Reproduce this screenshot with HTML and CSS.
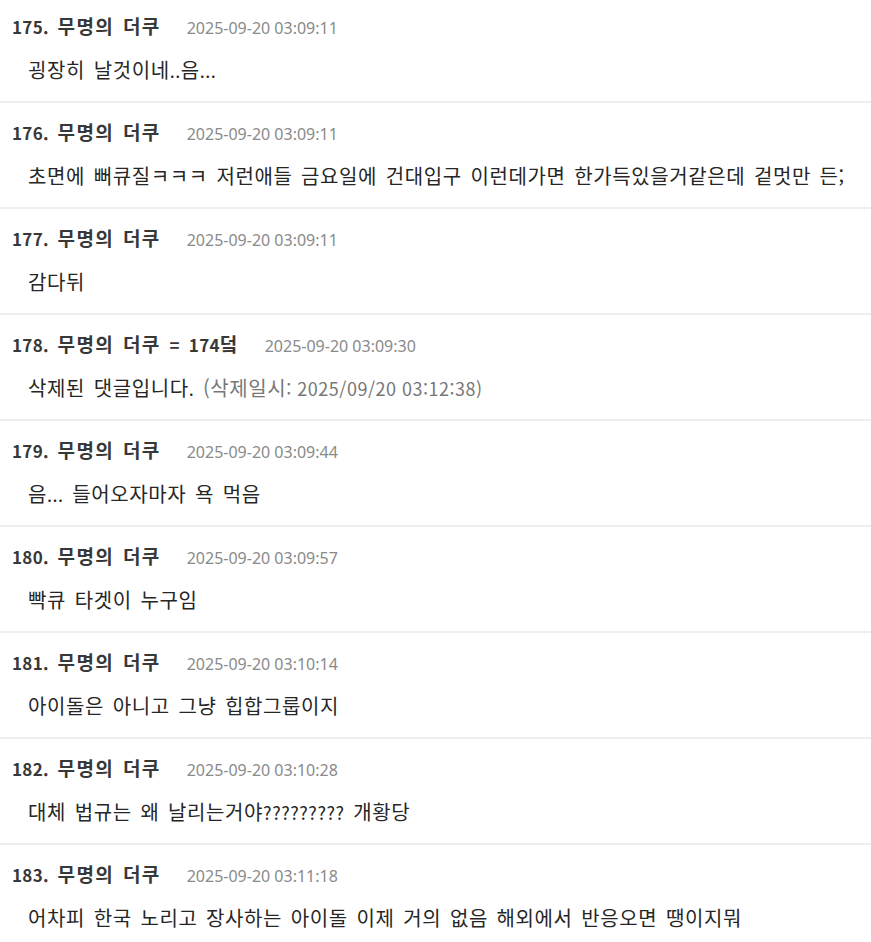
FILE: index.html
```html
<!DOCTYPE html>
<html lang="ko">
<head>
<meta charset="utf-8">
<link rel="stylesheet" href="styles.css">
</head>
<body>
<ul class="list">
  <li class="item"><div class="head"><span class="name"><span class="num">175.</span> 무명의 더쿠</span><span class="time">2025-09-20 03:09:11</span></div><p class="body">굉장히 날것이네<span class="lat">..</span>음<span class="lat">...</span></p></li>
  <li class="item"><div class="head"><span class="name"><span class="num">176.</span> 무명의 더쿠</span><span class="time">2025-09-20 03:09:11</span></div><p class="body">초면에 뻐큐질ㅋㅋㅋ 저런애들 금요일에 건대입구 이런데가면 한가득있을거같은데 겉멋만 든;</p></li>
  <li class="item"><div class="head"><span class="name"><span class="num">177.</span> 무명의 더쿠</span><span class="time">2025-09-20 03:09:11</span></div><p class="body">감다뒤</p></li>
  <li class="item"><div class="head"><span class="name"><span class="num">178.</span> 무명의 더쿠 <span class="num eq">= 174</span>덬</span><span class="time">2025-09-20 03:09:30</span></div><p class="body">삭제된 댓글입니다<span class="lat">.</span> <span class="del">(삭제일시<span class="lat">: 2025/09/20 03:12:38)</span></span></p></li>
  <li class="item"><div class="head"><span class="name"><span class="num">179.</span> 무명의 더쿠</span><span class="time">2025-09-20 03:09:44</span></div><p class="body">음<span class="lat">...</span> 들어오자마자 욕 먹음</p></li>
  <li class="item"><div class="head"><span class="name"><span class="num">180.</span> 무명의 더쿠</span><span class="time">2025-09-20 03:09:57</span></div><p class="body">빡큐 타겟이 누구임</p></li>
  <li class="item"><div class="head"><span class="name"><span class="num">181.</span> 무명의 더쿠</span><span class="time">2025-09-20 03:10:14</span></div><p class="body">아이돌은 아니고 그냥 힙합그룹이지</p></li>
  <li class="item"><div class="head"><span class="name"><span class="num">182.</span> 무명의 더쿠</span><span class="time">2025-09-20 03:10:28</span></div><p class="body">대체 법규는 왜 날리는거야<span class="lat">?????????</span> 개황당</p></li>
  <li class="item"><div class="head"><span class="name"><span class="num">183.</span> 무명의 더쿠</span><span class="time">2025-09-20 03:11:18</span></div><p class="body">어차피 한국 노리고 장사하는 아이돌 이제 거의 없음 해외에서 반응오면 땡이지뭐</p></li>
</ul>
</body>
</html>
```

FILE: styles.css
```css
html, body {
  margin: 0;
  padding: 0;
  background: #fff;
}
body {
  font-family: "Noto Sans CJK KR", "Noto Sans", sans-serif;
  overflow: hidden;
}
.list {
  list-style: none;
  margin: -3px 0 0 0;
  padding: 0;
}
.item {
  padding: 16px 12px 18px;
  border-bottom: 2px solid #eeeeee;
}
.head {
  display: flex;
  align-items: baseline;
  gap: 26px;
  height: 26px;
  line-height: 26px;
  white-space: nowrap;
}
.name {
  font-size: 19px;
  font-weight: 700;
  letter-spacing: 1.4px;
  word-spacing: 2px;
  color: #383838;
}
.num {
  font-size: 17px;
  letter-spacing: 0.3px;
}
.eq {
  word-spacing: 4px;
}
.time {
  font-family: "Noto Sans", "Noto Sans CJK KR", sans-serif;
  font-size: 16px;
  color: #8a8a8a;
}
.body {
  margin: 18px 0 0 16px;
  font-size: 20px;
  letter-spacing: 0.6px;
  word-spacing: 2.5px;
  line-height: 26px;
  color: #262626;
  white-space: nowrap;
}
.lat {
  font-size: 18px;
  letter-spacing: 0.5px;
  word-spacing: 0;
}
.del {
  color: #777;
}
```
